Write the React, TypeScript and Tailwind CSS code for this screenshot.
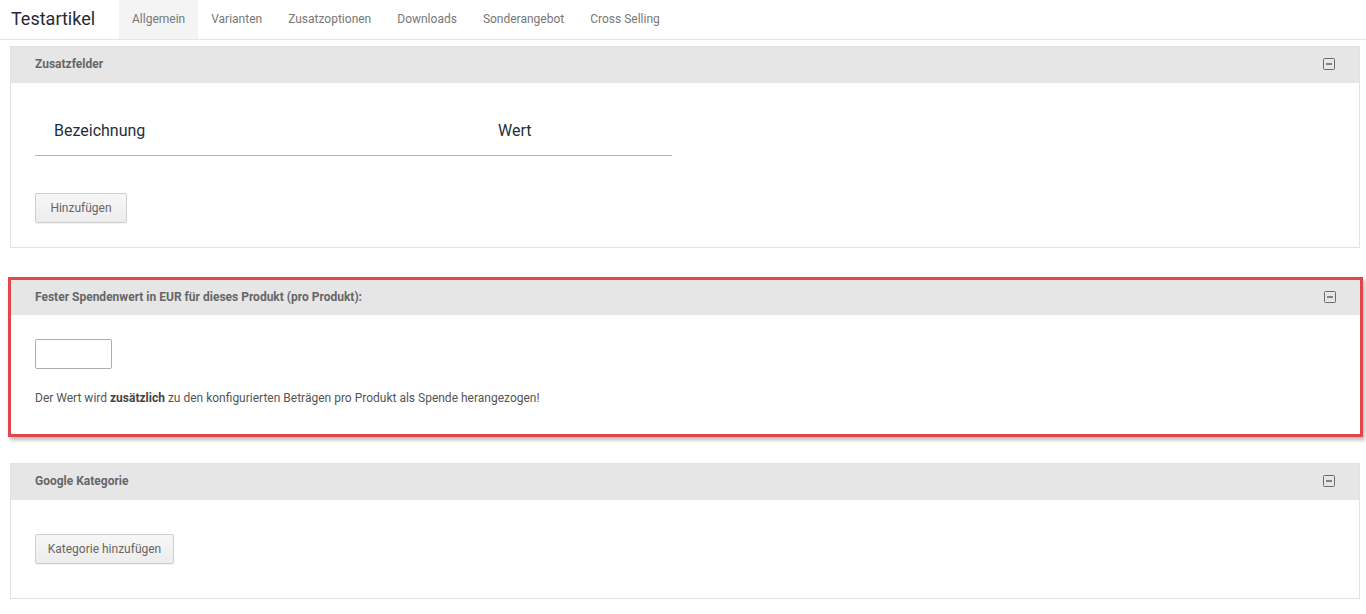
import type { ReactNode } from 'react'

const tabs = ['Allgemein', 'Varianten', 'Zusatzoptionen', 'Downloads', 'Sonderangebot', 'Cross Selling']

function CollapseIcon() {
  return (
    <svg width="12" height="12" viewBox="0 0 12 12" fill="none">
      <rect x="0.5" y="0.5" width="11" height="11" rx="1" stroke="#6b6b6b" />
      <line x1="3" y1="6" x2="9" y2="6" stroke="#6b6b6b" strokeWidth="1.6" />
    </svg>
  )
}

function Panel({ title, children, className = '' }: { title: string; children: ReactNode; className?: string }) {
  return (
    <section className={`bg-white border border-[#e2e2e2] ${className}`}>
      <div className="h-[36px] bg-[#e6e6e6] flex items-center justify-between pl-[24px] pr-[24px] pb-[2px]">
        <h2 className="text-[12px] font-bold text-[#666]">{title}</h2>
        <CollapseIcon />
      </div>
      {children}
    </section>
  )
}

function GrayButton({ label, width }: { label: string; width: string }) {
  return (
    <button
      className={`${width} h-[30px] text-[12px] text-[#666] border border-[#cfcfcf] rounded-[2px] bg-gradient-to-b from-[#f7f7f7] to-[#ececec] shadow-[0_1px_1px_rgba(0,0,0,0.06)]`}
    >
      {label}
    </button>
  )
}

export default function App() {
  return (
    <div className="min-h-screen bg-white font-['Roboto','Liberation_Sans',sans-serif]">
      {/* Kopfzeile mit Artikelname und Reitern */}
      <nav className="flex h-[40px] border-b border-[#e4e4e4]">
        <h1 className="w-[119px] pl-[11px] text-[18px] leading-[38px] text-[#1e2b38]">Testartikel</h1>
        {tabs.map((tab, i) => (
          <div
            key={tab}
            className={`px-[13px] pb-[2px] flex items-center text-[12px] text-[#777] ${i === 0 ? 'bg-[#f4f4f4]' : ''}`}
          >
            {tab}
          </div>
        ))}
      </nav>

      <main className="pl-[10px] pr-[6px] pt-[6px]">
        <Panel title="Zusatzfelder">
          <div className="px-[24px] pt-[23px] pb-[24px]">
            <div className="w-[637px] h-[50px] flex items-center border-b border-[#b3b3b3] text-[16px] text-[#1f2e3d]">
              <div className="w-[463px] pl-[19px]">Bezeichnung</div>
              <div>Wert</div>
            </div>
            <div className="mt-[37px]">
              <GrayButton label="Hinzufügen" width="w-[92px]" />
            </div>
          </div>
        </Panel>

        {/* Spendenwert, rot hervorgehoben */}
        <div className="mt-[29px] -ml-[2px] -mr-[3px] border-[3px] border-[#e0474c] shadow-[2px_3px_4px_rgba(0,0,0,0.28)]">
          <section className="bg-white">
            <div className="h-[35px] bg-[#e6e6e6] flex items-center justify-between pl-[24px] pr-[24px] pb-[2px]">
              <h2 className="text-[12px] font-bold text-[#666]">Fester Spendenwert in EUR für dieses Produkt (pro Produkt):</h2>
              <CollapseIcon />
            </div>
            <div className="px-[24px] pt-[24px] pb-[27px]">
              <input type="text" className="block w-[77px] h-[30px] border border-[#adadad] rounded-[2px]" />
              <p className="mt-[21px] text-[12px] leading-[17px] text-[#555]">
                Der Wert wird <b className="text-[#444]">zusätzlich</b> zu den konfigurierten Beträgen pro Produkt als Spende herangezogen!
              </p>
            </div>
          </section>
        </div>

        <Panel title="Google Kategorie" className="mt-[26px]">
          <div className="px-[24px] pt-[34px] pb-[34px]">
            <GrayButton label="Kategorie hinzufügen" width="w-[139px]" />
          </div>
        </Panel>
      </main>
    </div>
  )
}
